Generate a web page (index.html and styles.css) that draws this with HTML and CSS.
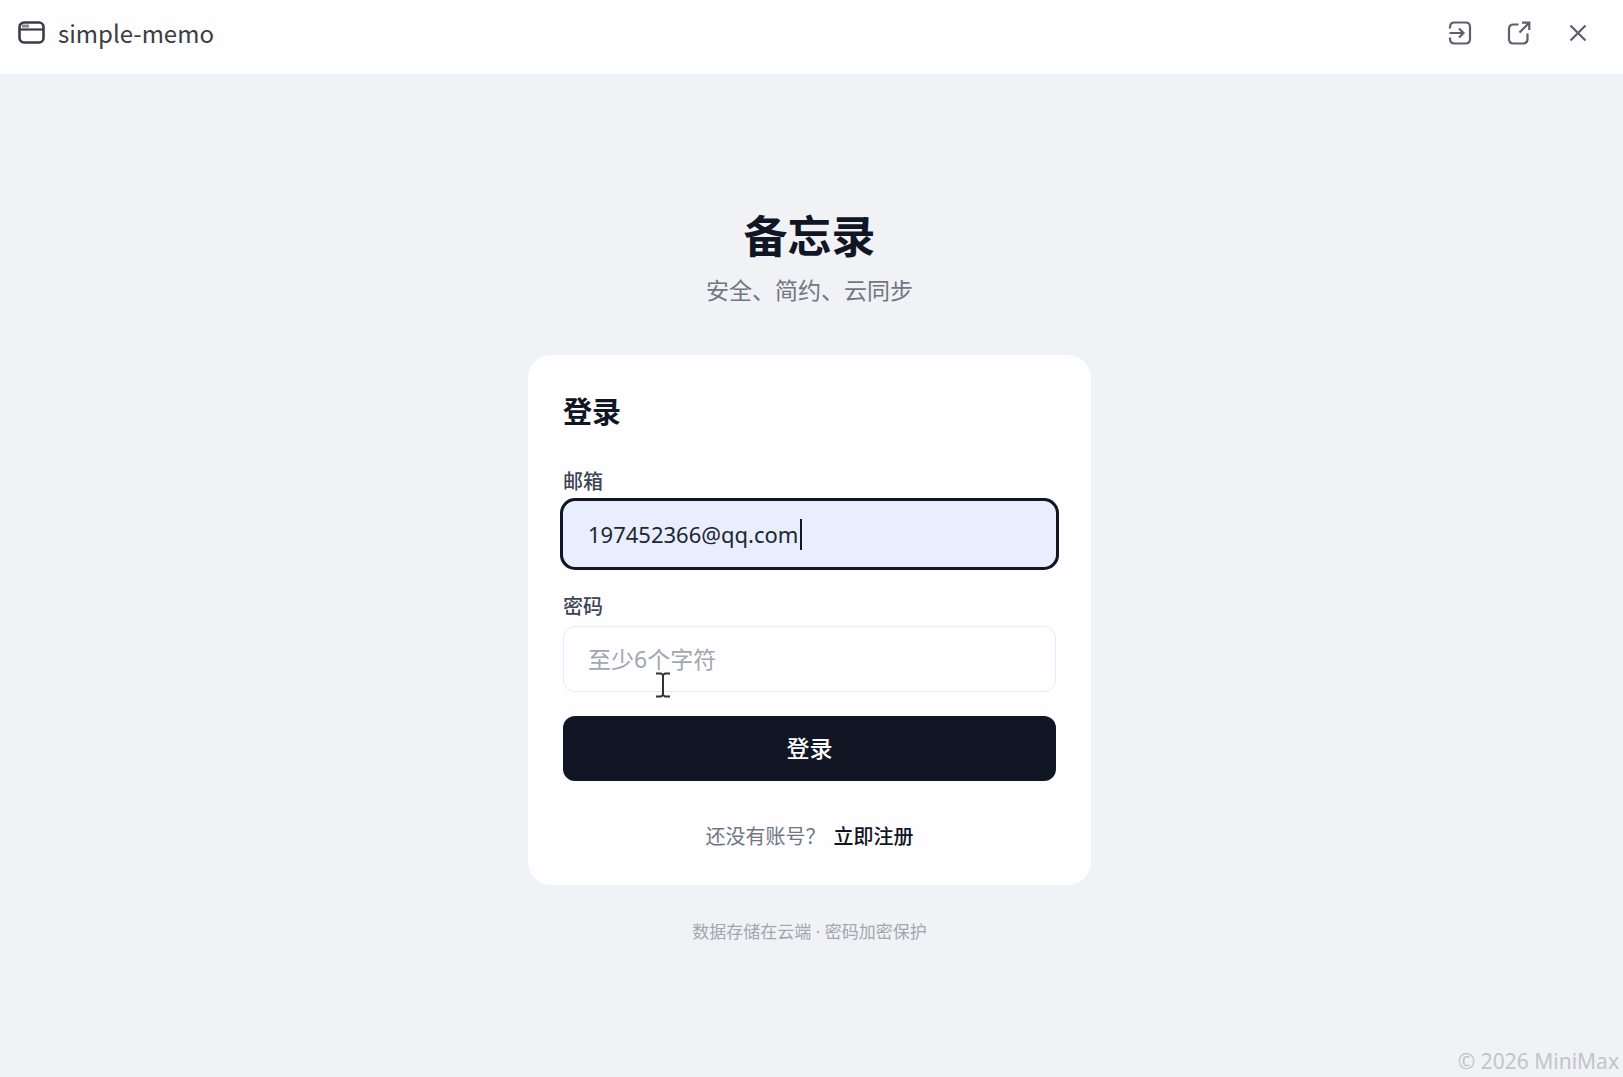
FILE: index.html
```html
<!DOCTYPE html>
<html lang="zh-CN">
<head>
  <meta charset="UTF-8" />
  <title>simple-memo</title>
  <meta name="viewport" content="width=device-width, initial-scale=1.0" />
  <link rel="stylesheet" href="styles.css">
</head>
<body>
  <header class="topbar">
    <div class="brand">
      <svg class="brand-icon" viewBox="0 0 28 24" fill="none" stroke="currentColor">
        <rect x="1.5" y="1.5" width="24" height="20" rx="4.5" stroke-width="2.6" />
        <path d="M2 8.5H25" stroke-width="2.2" />
        <path d="M4 5H11" stroke-width="3" opacity="0.6" />
      </svg>
      <span>simple-memo</span>
    </div>
    <div class="actions">
      <button type="button" class="icon-btn" aria-label="收起">
        <svg viewBox="0 0 24 24" fill="none" stroke="currentColor" stroke-width="2.2">
          <path d="M2 7.5V6Q2 1.500 6.500 1.500H17.500Q22 1.500 22 6V18Q22 22.500 17.500 22.500H6.500Q2 22.500 2 18V16.500" />
          <path d="M1.500 12H15M11 7.500L15.500 12L11 16.500" />
        </svg>
      </button>
      <button type="button" class="icon-btn" aria-label="在新窗口打开">
        <svg viewBox="0 0 24 24" fill="none" stroke="currentColor" stroke-width="2.2">
          <path d="M11.500 3.500H6.500Q2 3.500 2 8V18Q2 22.500 6.500 22.500H16Q20.500 22.500 20.500 18V12.500" />
          <path d="M15 1.700H22.300V9M22 2L12.500 11.500" />
        </svg>
      </button>
      <button type="button" class="icon-btn" aria-label="关闭">
        <svg viewBox="0 0 24 24" fill="none" stroke="currentColor" stroke-width="2.2">
          <path d="M4.500 4.500L19.500 19.500M19.500 4.500L4.500 19.500" />
        </svg>
      </button>
    </div>
  </header>

  <main class="page">
    <h1>备忘录</h1>
    <p class="subtitle">安全、简约、云同步</p>

    <!-- Login card -->
    <form class="card">
      <h2>登录</h2>
      <div class="input-group">
        <label for="email">邮箱</label>
        <div class="field">
          <input type="text" id="email" class="active" value="197452366@qq.com" />
          <span class="caret"></span>
        </div>
      </div>
      <div class="input-group">
        <label for="password">密码</label>
        <div class="field">
          <input type="password" id="password" placeholder="至少6个字符" />
          <svg class="pointer" viewBox="0 0 14 26" fill="none" stroke="#333" stroke-width="2">
            <path d="M0 1.500H5L7 3L9 1.500H14M0 24.500H5L7 23L9 24.500H14M7 3V23" />
          </svg>
        </div>
      </div>
      <button type="button" class="submit">登录</button>
      <p class="switch">还没有账号？<a href="#">立即注册</a></p>
    </form>

    <p class="note">数据存储在云端 · 密码加密保护</p>
  </main>

  <div class="copyright">© 2026 MiniMax</div>
</body>
</html>
```

FILE: styles.css
```css
* {
  box-sizing: border-box;
}
body {
  display: flex;
  flex-direction: column;
  min-height: 100vh;
  margin: 0;
  font-family: "Noto Sans CJK SC", sans-serif;
  background: #f0f2f5;
  color: #101624;
}
h1, h2, p {
  margin: 0;
}
.topbar {
  display: flex;
  align-items: center;
  justify-content: space-between;
  padding: 16px 32px 24px 18px;
  background: #fefdff;
}
.brand {
  display: flex;
  align-items: center;
  gap: 12px;
  font-size: 24px;
  line-height: 34px;
  color: #3c3c40;
}
.brand-icon {
  width: 28px;
  height: 24px;
}
.actions {
  display: flex;
  gap: 34px;
}
.icon-btn {
  width: 25px;
  height: 25px;
  padding: 0;
  border: none;
  background: none;
  color: #606064;
}
.icon-btn svg {
  display: block;
  width: 24px;
  height: 24px;
}
.page {
  flex: 1;
  display: flex;
  flex-direction: column;
  align-items: center;
  justify-content: center;
  padding-right: 4px;
}
h1 {
  font-size: 44px;
  line-height: 53px;
}
.subtitle {
  margin: 11px 0 48px;
  font-size: 23px;
  line-height: 35px;
  color: #71767f;
}
.card {
  width: 100%;
  max-width: 563px;
  padding: 35px;
  border-radius: 23px;
  background: #fefdff;
}
h2 {
  margin-bottom: 35px;
  font-size: 29px;
  line-height: 41px;
}
.input-group {
  display: flex;
  flex-direction: column;
  gap: 6px;
  margin-bottom: 24px;
}
label {
  font-size: 20px;
  font-weight: 500;
  line-height: 29px;
  color: #3d4452;
}
.field {
  position: relative;
}
input {
  display: block;
  width: 100%;
  height: 66px;
  padding: 0 24px;
  border: 1px solid #e9ebef;
  border-radius: 12px;
  outline: none;
  background: #fefdff;
  color: #22262e;
  font-family: "Noto Sans", "Noto Sans CJK SC", sans-serif;
  font-size: 22px;
}
input::placeholder {
  color: #a2a6ae;
  font-size: 23px;
}
input.active {
  border-color: #e8eefe;
  background: #e8eefe;
  box-shadow: 0 0 0 3px #101624;
}
.caret {
  position: absolute;
  top: 18px;
  left: 237px;
  width: 2px;
  height: 31px;
  background: #101624;
}
.pointer {
  position: absolute;
  top: 46px;
  left: 93px;
  width: 14px;
  height: 26px;
}
.submit {
  width: 100%;
  height: 65px;
  padding: 0 0 3px;
  border: none;
  border-radius: 12px;
  background: #101624;
  color: #fefdff;
  font-family: inherit;
  font-size: 23px;
  font-weight: 500;
}
.switch {
  margin-top: 40px;
  font-size: 20px;
  line-height: 29px;
  text-align: center;
  color: #71767f;
}
.switch a {
  margin-left: 8px;
  color: #101624;
  font-weight: 500;
  text-decoration: none;
}
.note {
  margin-top: 35px;
  font-family: "Noto Sans", "Noto Sans CJK SC", sans-serif;
  font-size: 17px;
  line-height: 24px;
  color: #a2a6ae;
}
.copyright {
  position: absolute;
  right: 4px;
  bottom: 0;
  font-family: "Noto Sans", sans-serif;
  font-size: 21px;
  line-height: 32px;
  color: #c4c4c8;
}
```
